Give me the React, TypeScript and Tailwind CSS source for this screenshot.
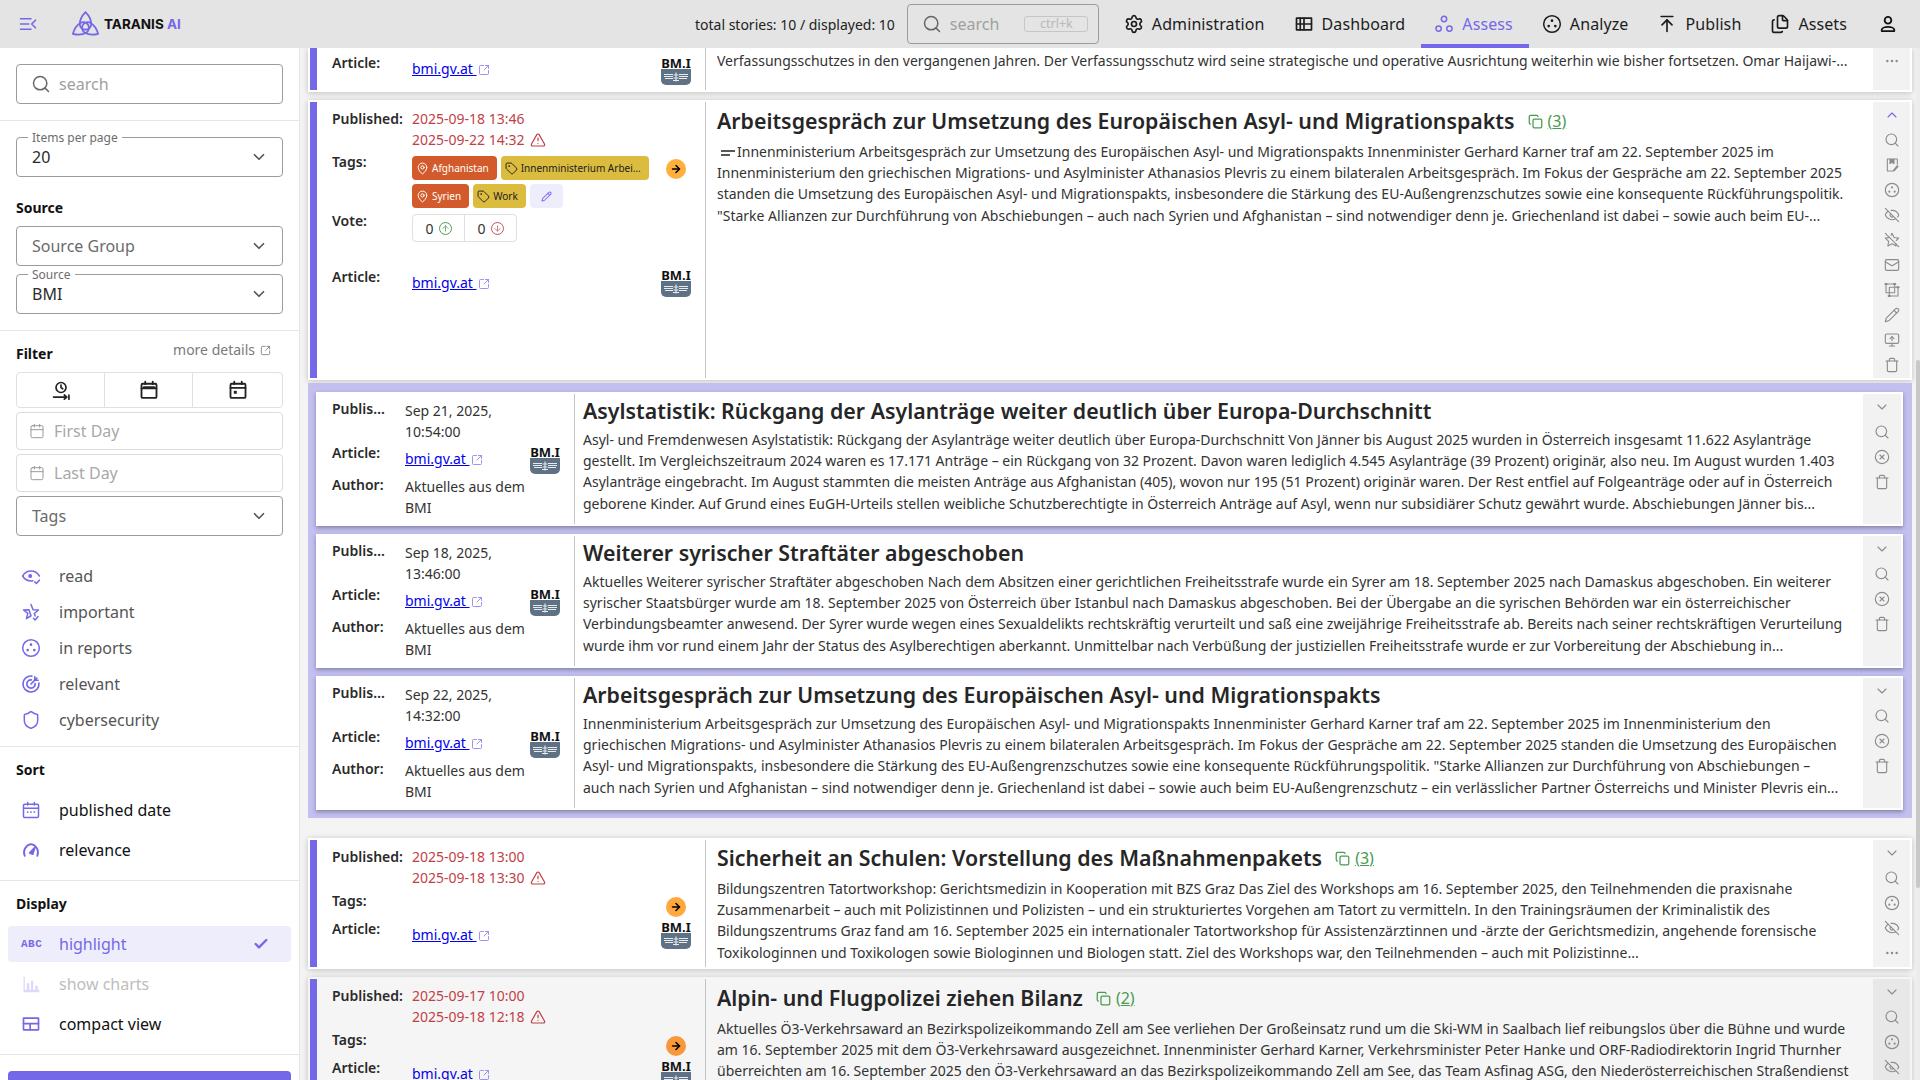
import React from "react";
import { Search, ChevronDown, ChevronUp, SquareArrowOutUpRight, Calendar, Shield, Check, EyeOff, StarOff, Mail, Pencil, MonitorUp, Trash, CircleX, Ellipsis, ArrowUpToLine, ArrowRight, ArrowUp, ArrowDown, TriangleAlert, MapPin, Tag, Copy, Settings, Files } from "lucide-react";

const S = ({ size = 18, children, className = "", sw = 1.8, vb = "0 0 24 24" }: { size?: number; children: React.ReactNode; className?: string; sw?: number; vb?: string }) => (
  <svg width={size} height={size} viewBox={vb} fill="none" stroke="currentColor" strokeWidth={sw} strokeLinecap="round" strokeLinejoin="round" className={className}>{children}</svg>
);

const Dots3 = ({ size = 20, className = "" }: { size?: number; className?: string }) => (
  <S size={size} className={className}>
    <circle cx="12" cy="12" r="10" />
    <circle cx="12" cy="8" r="1.6" fill="currentColor" stroke="none" />
    <circle cx="8" cy="14.5" r="1.6" fill="currentColor" stroke="none" />
    <circle cx="16" cy="14.5" r="1.6" fill="currentColor" stroke="none" />
  </S>
);
const AssessIcon = ({ className = "" }: { className?: string }) => (
  <S size={20} className={className}>
    <circle cx="12" cy="6" r="3.2" /><circle cx="5.5" cy="17.5" r="3.2" /><circle cx="18.5" cy="17.5" r="3.2" />
  </S>
);
const TableIcon = () => (
  <S size={20} sw={2}>
    <rect x="3" y="5" width="18" height="14" /><path d="M3 12h18M12 5v14M7.5 5v14" />
  </S>
);
const UserIcon = () => (
  <S size={20} sw={2.2}>
    <circle cx="12" cy="7.5" r="4" /><path d="M4.5 20.5v-1.5c0-2 3.5-3.5 7.5-3.5s7.5 1.5 7.5 3.5v1.5z" />
  </S>
);
const Logo = () => (
  <S size={27} sw={1.7} vb="0 0 26 26" className="text-[#7468e8]">
    {[0, 120, 240].map((r) => (
      <path key={r} transform={`rotate(${r} 13 15)`} d="M13 1 C9 5 7.5 9 7.5 12.5 C7.5 15.5 10 18 13 18 C16 18 18.5 15.5 18.5 12.5 C18.5 9 17 5 13 1Z" />
    ))}
  </S>
);
const BmLogo = () => (
  <div className="flex h-[28px] w-[30px] flex-col items-center">
    <div className="h-[12px] text-[13px] font-bold leading-[12px] text-[#111]">BM.I</div>
    <div className="mt-[0px] flex h-[16px] w-[30px] items-center justify-center rounded-b-[5px] bg-[#5f7285]">
      <svg width="26" height="11" viewBox="0 0 26 11" stroke="#e6ebef" strokeWidth="1.1" fill="none">
        <path d="M1 2.5h9M1 4.5h9M2 6.5h8M16 2.5h9M16 4.5h9M16 6.5h8M10 8.5h6M13 0.5v9M10.5 3h5M10.5 6h5" />
      </svg>
    </div>
  </div>
);
const LinkIcon = () => (
  <a className="inline-flex items-center text-[14px] text-[#0000ee] underline">bmi.gv.at&nbsp;<SquareArrowOutUpRight size={12} strokeWidth={1.7} className="ml-[1px] mt-[3px] text-[#8b81f0]" /></a>
);
const GoBtn = ({ c = "bg-[#ffb03b]" }: { c?: string }) => (
  <div className={`flex h-[20px] w-[20px] items-center justify-center rounded-full ${c}`}><ArrowRight size={12} strokeWidth={3} className="text-black" /></div>
);
const Lines = ({ lines, children }: { lines: string[]; children?: React.ReactNode }) => (
  <div className="text-[14px] leading-[21.2px] text-[#333]">
    {lines.map((l, i) => (
      <div key={i} className="overflow-hidden whitespace-nowrap">
        {i === 0 ? children : null}{l}
      </div>
    ))}
  </div>
);
const Label = ({ children, className = "" }: { children: React.ReactNode; className?: string }) => (
  <div className={`text-[14px] font-semibold leading-[21px] text-[#2a2a2a] ${className}`}>{children}</div>
);
const Title = ({ t, count }: { t: string; count?: number }) => (
  <div className="flex h-[28px] items-center whitespace-nowrap">
    <span className="text-[21.33px] font-semibold leading-[28px] text-[#262626]">{t}</span>
    {count ? (
      <span className="ml-[13px] flex items-center gap-[5px] text-[16px] text-[#4a9b4f]">
        <Copy size={15} strokeWidth={2} /><span className="underline">({count})</span>
      </span>
    ) : null}
  </div>
);
type Act = React.ReactNode;
const i16 = { size: 16, strokeWidth: 1.7 };
const chevronD = <ChevronDown {...i16} />;
const srch = <Search {...i16} />;
const rep = <Dots3 size={16} />;
const eyeOff = <EyeOff {...i16} />;
const more = <Ellipsis {...i16} />;
const del = <Trash {...i16} />;
const Actions = ({ items, w = "w-[37px]", bg = "bg-[#f2f2f2]" }: { items: Act[]; w?: string; bg?: string }) => (
  <div className={`flex shrink-0 flex-col items-center text-[#8c8c8c] ${w} ${bg}`}>
    {items.map((x, i) => (
      <div key={i} className="flex h-[25px] w-full shrink-0 items-center justify-center">{x}</div>
    ))}
  </div>
);
const Divider = () => <div className="w-px shrink-0 bg-[#c4c4c4]" />;
const Red = ({ a, b }: { a: string; b: string }) => (
  <div className="text-[14px] leading-[21px] text-[#c13f45]">
    <div>{a}</div>
    <div className="flex items-center gap-[5px]">{b}<TriangleAlert size={16} strokeWidth={1.8} /></div>
  </div>
);
const Chip = ({ c, icon, children }: { c: string; icon: React.ReactNode; children: React.ReactNode }) => (
  <div className={`flex h-[24px] items-center gap-[3px] whitespace-nowrap rounded-[4px] pl-[4px] pr-[8px] text-[10px] ${c}`}>{icon}{children}</div>
);

function Story({ pub, title, count, lines, h, gray, acts }: { pub: [string, string]; title: string; count: number; lines: string[]; h: string; gray?: boolean; acts: Act[] }) {
  return (
    <div className={`flex shrink-0 p-[2px] shadow-[0_1px_6px_rgba(0,0,0,0.22)] ${h} ${gray ? "bg-[#f5f5f5]" : "bg-white"}`}>
      <div className="w-[7px] shrink-0 bg-[#7468e8]" />
      <div className="w-[388px] shrink-0 pl-[15px] pr-[14px] pt-[6px]">
        <div className="flex h-[43px]">
          <Label className="w-[80px]">Published:</Label>
          <Red a={pub[0]} b={pub[1]} />
        </div>
        <div className="flex h-[29px]">
          <Label className="mt-[1px] w-[80px]">Tags:</Label>
          <div className="flex-1" />
          <div className="flex w-[30px] justify-center pt-[8px]"><GoBtn c={gray ? "bg-[#f8983a]" : "bg-[#ffa83b]"} /></div>
        </div>
        <div className="flex">
          <Label className="w-[80px]">Article:</Label>
          <div className="flex-1 pt-[6px] leading-[21px]"><LinkIcon /></div>
          <div className="pt-[3px]"><BmLogo /></div>
        </div>
      </div>
      <Divider />
      <div className={`min-w-0 flex-1 pl-[11px] pr-[6px] ${gray ? "pt-[5px]" : "pt-[4px]"}`}>
        <Title t={title} count={count} />
        <div className="mt-[6px]"><Lines lines={lines} /></div>
      </div>
      <Actions items={acts} bg={gray ? "bg-[#e8e8e8]" : "bg-[#f2f2f2]"} />
    </div>
  );
}

function Inner({ date, title, lines }: { date: string; title: string; lines: string[] }) {
  return (
    <div className="flex h-[134px] shrink-0 bg-white p-[2px] shadow-[0_2px_4px_rgba(40,40,80,0.4)]">
      <div className="w-[256px] shrink-0 pl-[14px] pr-[14px]">
        <div className="flex h-[48px]">
          <Label className="w-[73px] pt-[4px]">Publis…</Label>
          <div className="pt-[6px] text-[14px] leading-[21px] text-[#333]"><div>{date.split("|")[0]}</div><div>{date.split("|")[1]}</div></div>
        </div>
        <div className="flex h-[32px]">
          <Label className="w-[73px]">Article:</Label>
          <div className="flex-1 pt-[6px] leading-[21px]"><LinkIcon /></div>
          <div className="pt-[4px]"><BmLogo /></div>
        </div>
        <div className="flex">
          <Label className="w-[73px]">Author:</Label>
          <div className="pt-[2px] text-[14px] leading-[21px] text-[#333]"><div>Aktuelles aus dem</div><div>BMI</div></div>
        </div>
      </div>
      <Divider />
      <div className="min-w-0 flex-1 pl-[8px] pr-[4px] pt-[3px]">
        <Title t={title} />
        <div className="mt-[4px]"><Lines lines={lines} /></div>
      </div>
      <Actions w="w-[38px]" items={[chevronD, srch, <CircleX {...i16} />, del]} />
    </div>
  );
}

const SideField = ({ label, value, gray }: { label?: string; value: string; gray?: boolean }) => (
  <div className="relative flex h-[40px] items-center justify-between rounded-[4px] border border-[#9b9b9b] pl-[15px] pr-[14px]">
    {label ? <span className="absolute left-[11px] top-[-9px] bg-white px-[4px] text-[12px] leading-[17px] text-[#6d6d6d]">{label}</span> : null}
    <span className={`text-[16px] ${gray ? "text-[#6b6b6b]" : "text-[#2b2b2b]"}`}>{value}</span>
    <ChevronDown size={18} strokeWidth={2.2} className="text-[#555]" />
  </div>
);
const H = ({ children, className = "" }: { children: React.ReactNode; className?: string }) => (
  <div className={`text-[14px] font-bold leading-[20px] text-[#111] ${className}`}>{children}</div>
);
const Hr = () => <div className="h-px shrink-0 bg-[#e6e6e6]" />;
const DateField = ({ t }: { t: string }) => (
  <div className="flex h-[38px] items-center gap-[9px] rounded-[4px] border border-[#dcdcdc] pl-[12px] text-[16px] text-[#a8a8a8]">
    <Calendar size={16} strokeWidth={1.5} className="text-[#9a9a9a]" />{t}
  </div>
);
const Row = ({ icon, t, c = "text-[#555]", h = "h-[36px]" }: { icon: React.ReactNode; t: string; c?: string; h?: string }) => (
  <div className={`flex shrink-0 items-center pl-[21px] text-[16px] ${h} ${c}`}>
    <div className="flex w-[38px] text-[#7468e8]">{icon}</div>{t}
  </div>
);
const EyeCheck = () => (
  <S size={20}>
    <path d="M2 12s3.5-6 10-6 10 6 10 6" /><path d="M2 12s3.5 6 10 6c.8 0 1.5-.1 2.2-.3" />
    <circle cx="11" cy="12" r="2.4" fill="currentColor" stroke="none" /><path d="M16.5 19l2 2 3.5-4" />
  </S>
);
const StarCheck = () => (
  <S size={20}>
    <path d="M12 3l2.5 6.2 6.5.4-5 4.2 1 3M12 16.5L6.5 20l1.7-6.3L3 9.6l6.5-.4z" /><path d="M15 19.5l2 2 3.5-4" />
  </S>
);
const Bullseye = () => (
  <S size={20} sw={2}>
    <path d="M21.5 11A9.6 9.6 0 1 1 13 2.5" /><path d="M17 11.5A5 5 0 1 1 12.5 7" /><path d="M12 12l7-7M16.5 3.5V7.5h4" />
  </S>
);
const CalDots = () => (
  <S size={20}>
    <rect x="3" y="5" width="18" height="16" rx="1.5" /><path d="M3 10h18M8 3v3M16 3v3" /><path d="M8 14.5h.01M12 14.5h.01M16 14.5h.01" strokeWidth={2.2} />
  </S>
);
const GaugeIco = () => (
  <S size={20} sw={2.2}>
    <path d="M4.5 19A10 10 0 0 1 12 5a10 10 0 0 1 7.5 14" /><path d="M10.5 15.5L16.5 9l-2.5 8z" fill="currentColor" />
  </S>
);
const Bars = () => (
  <S size={20} sw={0} className="text-[#dcd9f8]">
    <path fill="currentColor" stroke="none" d="M3 3h1.5v16H3zM3 19h19v3H3zM7 11h3v8H7zM12 8h2.5v11H12zM17 14h3v5h-3z" />
  </S>
);
const Compact = () => (
  <S size={20} sw={2}><rect x="3" y="5" width="18" height="14" /><path d="M3 11.5h18M11 11.5V19" /></S>
);
const TimeIcon = () => (
  <S size={20} sw={2}>
    <circle cx="12" cy="9" r="6" /><path d="M12 6v3l2 1.5" /><path d="M3 20.5h16M16 18l3 2.5-3 2.5M21.5 18v5" />
  </S>
);
const CalBar = () => (
  <S size={20} sw={2.2}><rect x="3" y="4.5" width="18" height="17" rx="1.5" /><path d="M3 10h18M7.5 2v3M16.5 2v3" /><path d="M6 9h12" strokeWidth={3} /></S>
);
const CalDay = () => (
  <S size={20} sw={2.2}><rect x="3" y="4.5" width="18" height="17" rx="1.5" /><path d="M3 9.5h18M7.5 2v3M16.5 2v3" /><rect x="7" y="13" width="3.5" height="3.5" fill="currentColor" stroke="none" /></S>
);

const Nav = ({ icon, t, active }: { icon: React.ReactNode; t: string; active?: boolean }) => (
  <div className={`flex h-[48px] items-center gap-[8px] pl-[13px] pr-[16px] text-[16px] tracking-[0.1px] ${active ? "border-b-[4px] border-[#7468e8] pt-[4px] text-[#7468e8]" : "text-[#1c1c1c]"}`}>
    {icon}{t}
  </div>
);

export default function App() {
  return (
    <div className="flex h-[1080px] w-[1920px] flex-col overflow-hidden bg-[#f4f4f4] font-['Noto_Sans',sans-serif]">
      <header className="flex h-[48px] shrink-0 items-center bg-[#e4e4e4]">
        <div className="ml-[19px] w-[53px] text-[#7468e8]">
          <S size={18} sw={2.2}><path d="M2 5h14M2 12h11M2 19h14M22 7l-5 5 5 5" /></S>
        </div>
        <Logo />
        <span className="ml-[5px] text-[13.5px] font-bold text-[#111] font-['Inter',sans-serif]">TARANIS <span className="text-[#7468e8]">AI</span></span>
        <span className="ml-auto text-[14px] text-[#222]">total stories: 10 / displayed: 10</span>
        <div className="ml-[12px] flex h-[40px] w-[192px] items-center rounded-[4px] border border-[#9b9b9b] pl-[14px]">
          <Search size={20} strokeWidth={1.8} className="text-[#666]" />
          <span className="ml-[8px] text-[16px] text-[#a0a0a0]">search</span>
          <span className="ml-[25px] flex h-[16px] w-[64px] items-center justify-center rounded-[3px] border border-[#c6c6c6] text-[12.5px] text-[#b8b8b8]">ctrl+k</span>
        </div>
        <div className="ml-[12px] flex items-center">
          <Nav icon={<Settings size={20} strokeWidth={2} />} t="Administration" />
          <Nav icon={<TableIcon />} t="Dashboard" />
          <Nav active icon={<AssessIcon />} t="Assess" />
          <Nav icon={<Dots3 />} t="Analyze" />
          <Nav icon={<ArrowUpToLine size={20} strokeWidth={2} />} t="Publish" />
          <Nav icon={<Files size={20} strokeWidth={2} />} t="Assets" />
          <div className="flex w-[57px] justify-start pl-[15px] text-[#111]"><UserIcon /></div>
        </div>
      </header>

      <div className="flex min-h-0 flex-1">
        <aside className="flex w-[300px] shrink-0 flex-col overflow-hidden border-r border-[#e4e4e4] bg-white">
          <div className="shrink-0 px-[16px] pb-[16px] pt-[16px]">
            <div className="flex h-[40px] items-center rounded-[4px] border border-[#9b9b9b] pl-[14px] text-[16px] text-[#a0a0a0]">
              <Search size={20} strokeWidth={1.8} className="mr-[8px] text-[#666]" />search
            </div>
          </div>
          <Hr />
          <div className="shrink-0 px-[16px] pb-[16px] pt-[16px]">
            <SideField label="Items per page" value="20" />
            <H className="mt-[21px]">Source</H>
            <div className="mt-[8px]"><SideField value="Source Group" gray /></div>
            <div className="mt-[8px]"><SideField label="Source" value="BMI" /></div>
          </div>
          <Hr />
          <div className="shrink-0 px-[16px] pt-[9px]">
            <div className="flex h-[32px] items-start justify-between">
              <H className="pt-[4px]">Filter</H>
              <div className="mr-[12px] flex items-center gap-[5px] text-[14px] leading-[20px] text-[#7a7a7a]">more details <SquareArrowOutUpRight size={11} strokeWidth={1.8} /></div>
            </div>
            <div className="flex h-[36px] rounded-[4px] border border-[#e0e0e0] text-[#222]">
              <div className="flex w-[88px] items-center justify-center border-r border-[#e0e0e0]"><TimeIcon /></div>
              <div className="flex w-[88px] items-center justify-center border-r border-[#e0e0e0]"><CalBar /></div>
              <div className="flex flex-1 items-center justify-center"><CalDay /></div>
            </div>
            <div className="mt-[4px]"><DateField t="First Day" /></div>
            <div className="mt-[4px]"><DateField t="Last Day" /></div>
            <div className="mt-[4px]"><SideField value="Tags" gray /></div>
          </div>
          <div className="mt-[22px] shrink-0">
            <Row icon={<EyeCheck />} t="read" />
            <Row icon={<StarCheck />} t="important" />
            <Row icon={<Dots3 size={20} />} t="in reports" />
            <Row icon={<Bullseye />} t="relevant" />
            <Row icon={<Shield size={20} strokeWidth={1.8} />} t="cybersecurity" />
          </div>
          <div className="mt-[8px] shrink-0"><Hr /></div>
          <div className="shrink-0 px-[16px] pt-[13px]"><H>Sort</H></div>
          <div className="mt-[10px] shrink-0">
            <Row h="h-[40px]" c="text-[#111]" icon={<CalDots />} t="published date" />
            <Row h="h-[40px]" c="text-[#111]" icon={<GaugeIco />} t="relevance" />
          </div>
          <div className="mt-[10px] shrink-0"><Hr /></div>
          <div className="shrink-0 px-[16px] pt-[13px]"><H>Display</H></div>
          <div className="mt-[12px] shrink-0 px-[8px]">
            <div className="flex h-[36px] items-center rounded-[4px] bg-[#eeedfb] pl-[13px] text-[16px] text-[#7468e8]">
              <span className="w-[38px] text-[11px] font-bold tracking-[0.5px] font-['Liberation_Mono',monospace]">ABC</span>highlight
              <Check size={16} strokeWidth={3.5} className="ml-auto mr-[22px]" />
            </div>
          </div>
          <div className="mt-[2px] shrink-0"><Row h="h-[40px]" c="text-[#bdbdbd]" icon={<Bars />} t="show charts" /></div>
          <Row h="h-[40px]" c="text-[#111]" icon={<Compact />} t="compact view" />
          <div className="mt-[10px] shrink-0"><Hr /></div>
          <div className="mt-[16px] shrink-0 px-[8px]"><div className="h-[40px] rounded-[4px] bg-[#7468e8]" /></div>
        </aside>

        <main className="relative flex min-w-0 flex-1 flex-col overflow-hidden pl-[8px] pr-[8px]">
          {/* partly scrolled first story */}
          <div className="flex h-[44px] shrink-0 bg-white pb-[2px] pl-[2px] pr-[2px] shadow-[0_1px_6px_rgba(0,0,0,0.22)]">
            <div className="w-[7px] shrink-0 bg-[#7468e8]" />
            <div className="flex w-[388px] shrink-0 pl-[15px] pr-[14px]">
              <Label className="w-[80px] pt-[4px]">Article:</Label>
              <div className="flex-1 pt-[10px] leading-[21px]"><LinkIcon /></div>
              <div className="pt-[9px]"><BmLogo /></div>
            </div>
            <Divider />
            <div className="min-w-0 flex-1 pl-[11px] pt-[2px]">
              <Lines lines={["Verfassungsschutzes in den vergangenen Jahren. Der Verfassungsschutz wird seine strategische und operative Ausrichtung weiterhin wie bisher fortsetzen. Omar Haijawi-..."]} />
            </div>
            <Actions items={[more]} />
          </div>

          <div className="mt-[8px] flex h-[280px] shrink-0 bg-white p-[2px] shadow-[0_1px_6px_rgba(0,0,0,0.22)]">
            <div className="w-[7px] shrink-0 bg-[#7468e8]" />
            <div className="w-[388px] shrink-0 pl-[15px] pr-[14px] pt-[6px]">
              <div className="flex h-[42px]">
                <Label className="w-[80px]">Published:</Label>
                <Red a="2025-09-18 13:46" b="2025-09-22 14:32" />
              </div>
              <div className="flex h-[59px]">
                <Label className="mt-[1px] w-[80px]">Tags:</Label>
                <div className="flex flex-1 flex-col gap-[4px] pt-[6px]">
                  <div className="flex gap-[4px]">
                    <Chip c="bg-[#d35b2b] text-white" icon={<MapPin size={13} strokeWidth={1.8} />}>Afghanistan</Chip>
                    <Chip c="bg-[#dcbc3e] text-[#222]" icon={<Tag size={13} strokeWidth={1.8} />}>Innenministerium Arbei…</Chip>
                  </div>
                  <div className="flex gap-[4px]">
                    <Chip c="bg-[#d35b2b] text-white" icon={<MapPin size={13} strokeWidth={1.8} />}>Syrien</Chip>
                    <Chip c="bg-[#dcbc3e] text-[#222]" icon={<Tag size={13} strokeWidth={1.8} />}>Work</Chip>
                    <div className="flex h-[24px] w-[33px] items-center justify-center rounded-[4px] bg-[#eeedfb] text-[#7f74ee]"><Pencil size={11} strokeWidth={2.2} /></div>
                  </div>
                </div>
                <div className="flex w-[30px] justify-center pt-[9px]"><GoBtn /></div>
              </div>
              <div className="flex h-[56px]">
                <Label className="w-[80px] pt-[1px]">Vote:</Label>
                <div className="mt-[5px] flex h-[28px] w-[105px] rounded-[4px] border border-[#e0e0e0] text-[14px] text-[#333]">
                  <div className="flex w-[52px] items-center justify-center gap-[5px] border-r border-[#e0e0e0]">0<span className="flex h-[13px] w-[13px] items-center justify-center rounded-full border border-[#4f9a55] text-[#4f9a55]"><ArrowUp size={9} strokeWidth={2} /></span></div>
                  <div className="flex flex-1 items-center justify-center gap-[5px]">0<span className="flex h-[13px] w-[13px] items-center justify-center rounded-full border border-[#c0545a] text-[#c0545a]"><ArrowDown size={9} strokeWidth={2} /></span></div>
                </div>
              </div>
              <div className="flex">
                <Label className="w-[80px] pt-[1px]">Article:</Label>
                <div className="flex-1 pt-[7px] leading-[21px]"><LinkIcon /></div>
                <div className="pt-[4px]"><BmLogo /></div>
              </div>
            </div>
            <Divider />
            <div className="min-w-0 flex-1 pl-[11px] pr-[6px] pt-[5px]">
              <Title t="Arbeitsgespräch zur Umsetzung des Europäischen Asyl- und Migrationspakts" count={3} />
              <div className="mt-[6px]">
                <Lines lines={[
                  "Innenministerium Arbeitsgespräch zur Umsetzung des Europäischen Asyl- und Migrationspakts Innenminister Gerhard Karner traf am 22. September 2025 im",
                  "Innenministerium den griechischen Migrations- und Asylminister Athanasios Plevris zu einem bilateralen Arbeitsgespräch. Im Fokus der Gespräche am 22. September 2025",
                  "standen die Umsetzung des Europäischen Asyl- und Migrationspakts, insbesondere die Stärkung des EU-Außengrenzschutzes sowie eine konsequente Rückführungspolitik.",
                  "\"Starke Allianzen zur Durchführung von Abschiebungen – auch nach Syrien und Afghanistan – sind notwendiger denn je. Griechenland ist dabei – sowie auch beim EU-...",
                ]}>
                  <svg width="16" height="6" viewBox="0 0 16 6" className="ml-[2px] mr-[2px] inline-block align-middle" stroke="#222" strokeWidth="1.4"><path d="M2 1h14M2 5h9" /></svg>
                </Lines>
              </div>
            </div>
            <Actions items={[
              <ChevronUp {...i16} className="text-[#7468e8]" />, srch,
              <S size={16} sw={1.6}><path d="M20 11V3H5v18h8" /><path d="M9 3v7l3-2 3 2V3" fill="currentColor" /><path d="M21 14l-5 6-2 1 1-2 5-6z" /></S>,
              rep, eyeOff, <StarOff {...i16} />, <Mail {...i16} />,
              <S size={16} sw={1.6}><rect x="3" y="3" width="13" height="13" /><rect x="8" y="8" width="13" height="13" /><path d="M2 3h2M15 3h2M20 8h2M7 21h2" strokeWidth={3} /></S>,
              <Pencil {...i16} />, <MonitorUp {...i16} />, del,
            ]} />
          </div>

          <div className="mt-[3px] flex h-[435px] shrink-0 flex-col gap-[8px] bg-[#c3bfee] pb-[8px] pl-[8px] pr-[9px] pt-[9px]">
            <Inner date="Sep 21, 2025,|10:54:00" title="Asylstatistik: Rückgang der Asylanträge weiter deutlich über Europa-Durchschnitt" lines={[
              "Asyl- und Fremdenwesen Asylstatistik: Rückgang der Asylanträge weiter deutlich über Europa-Durchschnitt Von Jänner bis August 2025 wurden in Österreich insgesamt 11.622 Asylanträge",
              "gestellt. Im Vergleichszeitraum 2024 waren es 17.171 Anträge – ein Rückgang von 32 Prozent. Davon waren lediglich 4.545 Asylanträge (39 Prozent) originär, also neu. Im August wurden 1.403",
              "Asylanträge eingebracht. Im August stammten die meisten Anträge aus Afghanistan (405), wovon nur 195 (51 Prozent) originär waren. Der Rest entfiel auf Folgeanträge oder auf in Österreich",
              "geborene Kinder. Auf Grund eines EuGH-Urteils stellen weibliche Schutzberechtigte in Österreich Anträge auf Asyl, wenn nur subsidiärer Schutz gewährt wurde. Abschiebungen Jänner bis...",
            ]} />
            <Inner date="Sep 18, 2025,|13:46:00" title="Weiterer syrischer Straftäter abgeschoben" lines={[
              "Aktuelles Weiterer syrischer Straftäter abgeschoben Nach dem Absitzen einer gerichtlichen Freiheitsstrafe wurde ein Syrer am 18. September 2025 nach Damaskus abgeschoben. Ein weiterer",
              "syrischer Staatsbürger wurde am 18. September 2025 von Österreich über Istanbul nach Damaskus abgeschoben. Bei der Übergabe an die syrischen Behörden war ein österreichischer",
              "Verbindungsbeamter anwesend. Der Syrer wurde wegen eines Sexualdelikts rechtskräftig verurteilt und saß eine zweijährige Freiheitsstrafe ab. Bereits nach seiner rechtskräftigen Verurteilung",
              "wurde ihm vor rund einem Jahr der Status des Asylberechtigen aberkannt. Unmittelbar nach Verbüßung der justiziellen Freiheitsstrafe wurde er zur Vorbereitung der Abschiebung in...",
            ]} />
            <Inner date="Sep 22, 2025,|14:32:00" title="Arbeitsgespräch zur Umsetzung des Europäischen Asyl- und Migrationspakts" lines={[
              "Innenministerium Arbeitsgespräch zur Umsetzung des Europäischen Asyl- und Migrationspakts Innenminister Gerhard Karner traf am 22. September 2025 im Innenministerium den",
              "griechischen Migrations- und Asylminister Athanasios Plevris zu einem bilateralen Arbeitsgespräch. Im Fokus der Gespräche am 22. September 2025 standen die Umsetzung des Europäischen",
              "Asyl- und Migrationspakts, insbesondere die Stärkung des EU-Außengrenzschutzes sowie eine konsequente Rückführungspolitik. \"Starke Allianzen zur Durchführung von Abschiebungen –",
              "auch nach Syrien und Afghanistan – sind notwendiger denn je. Griechenland ist dabei – sowie auch beim EU-Außengrenzschutz – ein verlässlicher Partner Österreichs und Minister Plevris ein...",
            ]} />
          </div>

          <div className="mt-[20px] shrink-0">
            <Story h="h-[131px]" pub={["2025-09-18 13:00", "2025-09-18 13:30"]} title="Sicherheit an Schulen: Vorstellung des Maßnahmenpakets" count={3} acts={[chevronD, srch, rep, eyeOff, more]} lines={[
              "Bildungszentren Tatortworkshop: Gerichtsmedizin in Kooperation mit BZS Graz Das Ziel des Workshops am 16. September 2025, den Teilnehmenden die praxisnahe",
              "Zusammenarbeit – auch mit Polizistinnen und Polizisten – und ein strukturiertes Vorgehen am Tatort zu vermitteln. In den Trainingsräumen der Kriminalistik des",
              "Bildungszentrums Graz fand am 16. September 2025 ein internationaler Tatortworkshop für Assistenzärztinnen und -ärzte der Gerichtsmedizin, angehende forensische",
              "Toxikologinnen und Toxikologen sowie Biologinnen und Biologen statt. Ziel des Workshops war, den Teilnehmenden – auch mit Polizistinne...",
            ]} />
          </div>
          <div className="mt-[8px] shrink-0">
            <Story gray h="h-[139px]" pub={["2025-09-17 10:00", "2025-09-18 12:18"]} title="Alpin- und Flugpolizei ziehen Bilanz" count={2} acts={[chevronD, srch, rep, eyeOff, more]} lines={[
              "Aktuelles Ö3-Verkehrsaward an Bezirkspolizeikommando Zell am See verliehen Der Großeinsatz rund um die Ski-WM in Saalbach lief reibungslos über die Bühne und wurde",
              "am 16. September 2025 mit dem Ö3-Verkehrsaward ausgezeichnet. Innenminister Gerhard Karner, Verkehrsminister Peter Hanke und ORF-Radiodirektorin Ingrid Thurnher",
              "überreichten am 16. September 2025 den Ö3-Verkehrsaward an das Bezirkspolizeikommando Zell am See, das Team Asfinag ASG, den Niederösterreichischen Straßendienst",
            ]} />
          </div>

          {/* scrollbar */}
          <div className="absolute bottom-0 right-0 top-0 w-[4px] bg-[#ececec]">
            <div className="mt-[312px] h-[528px] rounded-[2px] bg-[#c8c8c8]" />
          </div>
        </main>
      </div>
    </div>
  );
}
